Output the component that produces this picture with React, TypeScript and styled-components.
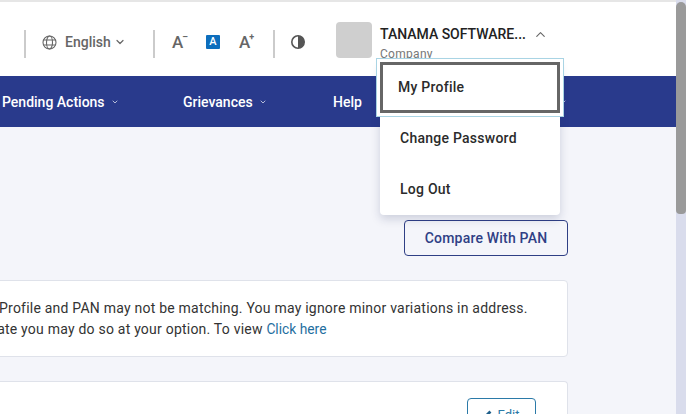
import { ChevronDown, ChevronUp } from 'lucide-react';
import styled, { createGlobalStyle } from 'styled-components';

const GlobalStyle = createGlobalStyle`
  html, body {
    margin: 0;
    height: 100%;
    overflow: hidden;
    font-family: Roboto, "Liberation Sans", sans-serif;
  }
  #root { height: 100%; }
`;

// 잘린 앞부분은 화면 왼쪽 밖으로 밀어 둔다.
const alertLines = [
  { text: 'Profile and PAN may not be matching. You may ignore minor variations in address.', shift: -1 },
  { text: 'update you may do so at your option. To view ', shift: -27, link: 'Click here' },
];

export default function App() {
  return (
    <Window>
      <GlobalStyle />
      <Page>
        <Header>
          <Divider />
          <Language>
            <svg width="15" height="15" viewBox="0 0 15 15" fill="none" stroke="#666" strokeWidth="1.1">
              <circle cx="7.5" cy="7.5" r="6.5" />
              <ellipse cx="7.5" cy="7.5" rx="3" ry="6.5" />
              <path d="M1.5 5h12M1.5 10h12" />
            </svg>
            <span>English</span>
            <ChevronDown size={12} strokeWidth={2.4} />
          </Language>
          <Divider />
          <FontTools>
            <FontStep>
              A<sup>–</sup>
            </FontStep>
            <FontActive>A</FontActive>
            <FontStep>
              A<sup>+</sup>
            </FontStep>
          </FontTools>
          <Divider />
          <ContrastIcon width="16" height="16" viewBox="0 0 16 16">
            <circle cx="8" cy="8" r="6.2" fill="none" stroke="#555" strokeWidth="1.6" />
            <path d="M8 1.8a6.2 6.2 0 0 1 0 12.4z" fill="#555" />
          </ContrastIcon>
          <Account>
            <Avatar />
            <AccountText>
              <AccountName>
                TANAMA SOFTWARE...
                <ChevronUp size={15} strokeWidth={1.8} />
              </AccountName>
              <AccountRole>Company</AccountRole>
            </AccountText>
            <Menu>
              <MenuItem $focused>My Profile</MenuItem>
              <MenuItem>Change Password</MenuItem>
              <MenuItem>Log Out</MenuItem>
            </Menu>
          </Account>
        </Header>

        <Nav>
          <NavItem $width={181}>
            Pending Actions
            <ChevronDown size={8} strokeWidth={2} />
          </NavItem>
          <NavItem $width={150}>
            Grievances
            <ChevronDown size={8} strokeWidth={2} />
          </NavItem>
          <NavItem $width={226}>Help</NavItem>
          <NavItem>
            <ChevronDown size={8} strokeWidth={2} />
          </NavItem>
        </Nav>

        <Main>
          <Actions>
            <CompareButton>Compare With PAN</CompareButton>
          </Actions>
          <AlertCard>
            {alertLines.map((line) => (
              <AlertLine key={line.text} $shift={line.shift}>
                {line.text}
                {line.link && <AlertLink>{line.link}</AlertLink>}
              </AlertLine>
            ))}
          </AlertCard>
          <DetailCard>
            <EditButton>
              <svg width="9" height="9" viewBox="0 0 9 9" fill="#1f5f8a">
                <path d="M6.4.6 8.4 2.6 3 8 .4 8.6 1 6z" />
              </svg>
              Edit
            </EditButton>
          </DetailCard>
        </Main>
      </Page>
      <Scrollbar>
        <ScrollThumb />
      </Scrollbar>
    </Window>
  );
}

const Window = styled.div`
  display: flex;
  height: 414px;
  overflow: hidden;
  background: #fff;
`;

const Page = styled.div`
  flex: 1;
  min-width: 0;
  display: flex;
  flex-direction: column;
  overflow: hidden;
`;

const Header = styled.header`
  display: flex;
  align-items: center;
  height: 76px;
  flex-shrink: 0;
  padding: 9px 0 0 24px;
  border-top: 2px solid #e6e6e6;
  box-sizing: border-box;
  color: #666;
`;

const Divider = styled.span`
  width: 2px;
  height: 28px;
  flex-shrink: 0;
  background: #cbcbcb;
`;

const Language = styled.div`
  display: flex;
  align-items: center;
  width: 127px;
  margin-bottom: 3px;
  padding-left: 16px;
  box-sizing: border-box;
  font-size: 14px;
  font-weight: 500;

  span {
    margin: 0 3px 0 8px;
  }
`;

const FontTools = styled.div`
  display: flex;
  align-items: center;
  gap: 19px;
  width: 118px;
  margin-bottom: 3px;
  padding-left: 17px;
  box-sizing: border-box;
`;

const FontStep = styled.span`
  display: flex;
  width: 15px;
  font-size: 17px;
  font-weight: 500;
  line-height: 20px;
  color: #666;

  sup {
    margin-left: -1px;
    font-size: 9px;
    line-height: 10px;
    font-weight: 700;
  }
`;

const FontActive = styled.span`
  width: 14px;
  height: 14px;
  border-radius: 1px;
  background: #0d6ebd;
  color: #fff;
  font-size: 11px;
  font-weight: 500;
  line-height: 14px;
  text-align: center;
`;

const ContrastIcon = styled.svg`
  margin: 0 0 3px 15px;
  flex-shrink: 0;
`;

const Account = styled.div`
  position: relative;
  display: flex;
  align-items: flex-start;
  gap: 8px;
  height: 36px;
  margin: 0 0 7px 30px;
`;

const Avatar = styled.div`
  width: 36px;
  height: 36px;
  border-radius: 4px;
  background: #cfcfcf;
`;

const AccountText = styled.div`
  display: flex;
  flex-direction: column;
  gap: 5px;
  margin-top: 4px;
`;

const AccountName = styled.div`
  display: flex;
  align-items: center;
  gap: 7px;
  height: 16px;
  font-size: 14px;
  font-weight: 500;
  color: #222;
  white-space: nowrap;

  svg {
    color: #666;
  }
`;

const AccountRole = styled.div`
  height: 14px;
  font-size: 12px;
  line-height: 14px;
  letter-spacing: 0.3px;
  color: #777;
`;

const Menu = styled.ul`
  position: absolute;
  z-index: 10;
  top: 40px;
  left: 44px;
  width: 180px;
  margin: 0;
  padding: 0;
  list-style: none;
  background: #fff;
  border-radius: 4px;
  box-shadow: 0 4px 10px rgba(30, 40, 90, 0.18);
`;

const MenuItem = styled.li<{ $focused?: boolean }>`
  display: flex;
  align-items: center;
  height: 51px;
  padding: 0 0 2px 20px;
  box-sizing: border-box;
  font-size: 14px;
  font-weight: 500;
  letter-spacing: 0.25px;
  color: #2b2b2b;

  ${({ $focused }) =>
    $focused &&
    `
    padding-left: 15px;
    border: 3px solid #666;
    box-shadow: 0 0 0 3px #fff, 0 0 0 4px #a9d4e4;
  `}
`;

const Nav = styled.nav`
  display: flex;
  align-items: center;
  height: 51px;
  flex-shrink: 0;
  padding-left: 2px;
  background: #293a8c;
`;

const NavItem = styled.div<{ $width?: number }>`
  display: flex;
  align-items: center;
  gap: 6px;
  flex-shrink: 0;
  width: ${({ $width }) => ($width ? `${$width}px` : 'auto')};
  font-size: 14px;
  font-weight: 500;
  color: #fff;
`;

const Main = styled.main`
  flex: 1;
  display: flex;
  flex-direction: column;
  padding: 93px 108px 0 0;
  background: #f4f5fa;
`;

const Actions = styled.div`
  display: flex;
  justify-content: flex-end;
`;

const CompareButton = styled.button`
  width: 164px;
  height: 36px;
  padding: 0;
  border: 1px solid #2f3f85;
  border-radius: 4px;
  background: transparent;
  color: #2f3f85;
  font-family: inherit;
  font-size: 14px;
  font-weight: 500;
  letter-spacing: 0.2px;
`;

const AlertCard = styled.section`
  height: 77px;
  margin: 24px 0 24px -8px;
  padding-top: 17px;
  box-sizing: border-box;
  background: #fff;
  border: 1px solid #dfe2ea;
  border-radius: 4px;
`;

const AlertLine = styled.p<{ $shift: number }>`
  margin: 0 0 0 ${({ $shift }) => $shift + 7}px;
  font-size: 14px;
  line-height: 21px;
  letter-spacing: 0.22px;
  white-space: nowrap;
  color: #333;
`;

const AlertLink = styled.a`
  font-size: 13.8px;
  letter-spacing: 0;
  color: #1f6f9f;
`;

const DetailCard = styled.section`
  display: flex;
  justify-content: flex-end;
  flex: 1;
  margin-left: -8px;
  padding: 16px 31px 0 0;
  background: #fff;
  border: 1px solid #dfe2ea;
  border-bottom: 0;
  border-radius: 4px 4px 0 0;
`;

const EditButton = styled.button`
  display: flex;
  align-items: center;
  justify-content: center;
  gap: 5px;
  width: 69px;
  height: 32px;
  padding: 0;
  border: 1px solid #2b7aa8;
  border-radius: 4px;
  background: #fff;
  color: #2b7aa8;
  font-family: inherit;
  font-size: 13px;
`;

const Scrollbar = styled.div`
  width: 10px;
  flex-shrink: 0;
  padding-top: 2px;
  background: #d9dcec;
`;

const ScrollThumb = styled.div`
  height: 212px;
  border-radius: 5px 5px 4px 4px;
  background: #9a9a9a;
`;
